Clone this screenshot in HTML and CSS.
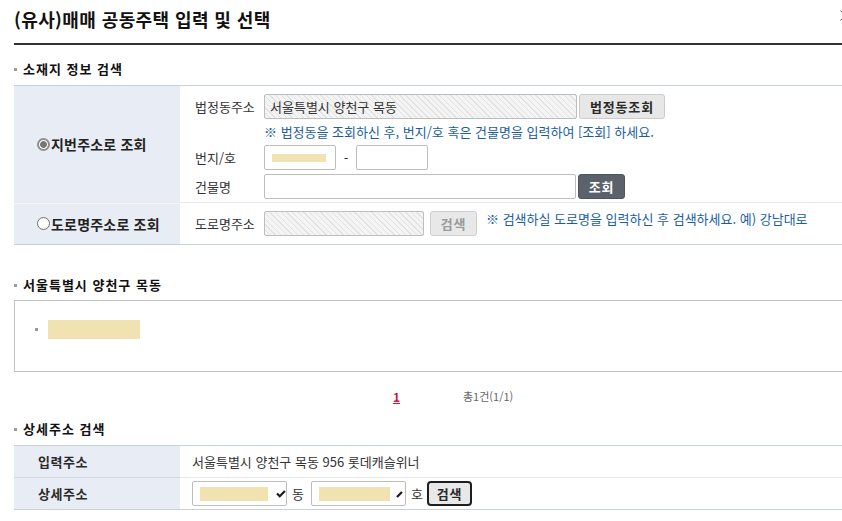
FILE: index.html
```html
<!DOCTYPE html>
<html lang="ko">
<head>
<meta charset="utf-8">
<title>(유사)매매 공동주택 입력 및 선택</title>
<link rel="stylesheet" href="styles.css">
</head>
<body>
<button class="close" type="button" aria-label="닫기">
  <svg width="10" height="11" viewBox="0 0 10 11"><path d="M0.5 0.5 L9.5 10.5 M0.5 10.5 L9.5 0.5" stroke="#555" stroke-width="1" fill="none"/></svg>
</button>
<div class="page">
  <h1 class="title">(유사)매매 공동주택 입력 및 선택</h1>

  <h2 class="sec-title sec-first">소재지 정보 검색</h2>
  <div class="search-table">
    <div class="row">
      <div class="th"><label class="radio"><span class="radio-mark checked"></span>지번주소로 조회</label></div>
      <div class="td td-jibun">
        <div class="line">
          <span class="lbl">법정동주소</span>
          <div class="input hatched wide">서울특별시 양천구 목동</div>
          <button class="btn btn-light" type="button">법정동조회</button>
        </div>
        <div class="notice notice-row">※ 법정동을 조회하신 후, 번지/호 혹은 건물명을 입력하여 [조회] 하세요.</div>
        <div class="line">
          <span class="lbl">번지/호</span>
          <div class="input short"><span class="mask mask-bunji"></span></div>
          <span class="dash">-</span>
          <div class="input short"></div>
        </div>
        <div class="line line-bld">
          <span class="lbl">건물명</span>
          <div class="input wide-b"></div>
          <button class="btn btn-dark" type="button">조회</button>
        </div>
      </div>
    </div>
    <div class="row row-road">
      <div class="th"><label class="radio"><span class="radio-mark"></span>도로명주소로 조회</label></div>
      <div class="td td-road">
        <div class="line">
          <span class="lbl">도로명주소</span>
          <div class="input hatched road"></div>
          <button class="btn btn-disabled" type="button">검색</button>
          <span class="notice notice-inline">※ 검색하실 도로명을 입력하신 후 검색하세요. 예) 강남대로</span>
        </div>
      </div>
    </div>
  </div>

  <h2 class="sec-title sec-second">서울특별시 양천구 목동</h2>
  <div class="result-box">
    <ul class="result-list">
      <li><span class="mask mask-result"></span></li>
    </ul>
  </div>

  <div class="paging">
    <a class="page-num" href="#">1</a>
    <span class="count">총1건(1/1)</span>
  </div>

  <h2 class="sec-title sec-third">상세주소 검색</h2>
  <div class="detail-table">
    <div class="row drow">
      <div class="th th-detail">입력주소</div>
      <div class="td td-detail">서울특별시 양천구 목동 956 롯데캐슬위너</div>
    </div>
    <div class="row drow drow-sep">
      <div class="th th-detail">상세주소</div>
      <div class="td td-detail">
        <div class="select"><span class="mask mask-sel1"></span>
          <svg class="arrow" width="10" height="8" viewBox="0 0 10 8"><path d="M1 3.5 L3.8 6.3 L9 1" stroke="#1a1a1a" stroke-width="2.2" fill="none"/></svg>
        </div>
        <span class="unit">동</span>
        <div class="select"><span class="mask mask-sel2"></span>
          <svg class="arrow arrow2" width="10" height="8" viewBox="0 0 10 8"><path d="M2 7 L7 2" stroke="#1a1a1a" stroke-width="2.2" fill="none"/></svg>
        </div>
        <span class="unit unit-ho">호</span>
        <button class="btn btn-focus" type="button">검색</button>
      </div>
    </div>
  </div>
</div>
</body>
</html>
```
FILE: styles.css
```css
* { box-sizing: border-box; }
html, body { margin: 0; padding: 0; overflow: hidden; background: #fff; }
body {
  position: relative;
  font-family: "Noto Sans CJK KR", "Noto Sans", sans-serif;
  font-size: 13px;
  color: #333;
}
.close {
  position: absolute;
  left: 840px;
  top: 9px;
  width: 12px;
  height: 12px;
  padding: 0;
  border: 0;
  background: none;
}
.close svg { display: block; }
.page { width: 900px; padding-left: 14px; }

.title {
  margin: 0;
  height: 45px;
  padding-top: 7px;
  line-height: 24px;
  font-size: 18px;
  font-weight: bold;
  color: #111;
  letter-spacing: 0.4px;
  border-bottom: 2px solid #333;
}

.sec-title {
  display: flex;
  align-items: center;
  margin: 0;
  height: 16px;
  line-height: 16px;
  font-size: 13px;
  font-weight: bold;
  letter-spacing: 1px;
  color: #111;
}
.sec-title::before {
  content: "";
  width: 3px;
  height: 3px;
  margin-right: 6px;
  background: #9a9a9a;
}
.sec-first { margin: 16px 0 8px; }
.sec-second { margin: 32px 0 7px; }
.sec-third { margin: 17px 0 8px; }

/* search table */
.search-table, .detail-table {
  border-top: 1px solid #c8d0d9;
  border-bottom: 1px solid #c8d0d9;
}
.row { display: grid; grid-template-columns: 167px 1fr; }
.th {
  background: #e8ecf4;
  border-right: 1px solid #fff;
  display: flex;
  align-items: center;
  padding-left: 23px;
}
.row-road { border-top: 1px solid #eaeaea; }
.row-road .th { box-shadow: inset 0 1px 0 #f3f5f9; }

.radio {
  display: inline-flex;
  align-items: center;
  font-size: 14px;
  font-weight: bold;
  letter-spacing: 0.2px;
  color: #222;
}
.radio-mark {
  width: 13px;
  height: 13px;
  border-radius: 50%;
  border: 1px solid #6f6f6f;
  background: #fff;
  margin-right: 1px;
}
.radio-mark.checked {
  border: 2px solid #8e8e8e;
  background: radial-gradient(circle, #767676 0 3px, #fff 3.8px);
}

.td { padding-left: 14px; }
.td-jibun { padding-top: 8px; padding-bottom: 3px; }
.td-road { padding-top: 8px; padding-bottom: 8px; }
.line { display: flex; align-items: center; height: 25px; }
.line-bld { margin-top: 4px; }
.lbl { width: 69px; color: #333; font-size: 13px; }

.input {
  height: 25px;
  border: 1px solid #bdbdbd;
  border-radius: 2px;
  background: #fff;
  display: flex;
  align-items: center;
  padding-left: 5px;
  color: #333;
  font-size: 13px;
}
.hatched {
  background: repeating-linear-gradient(45deg, #f4f4f4 0 3px, #e2e2e2 3px 4px);
}
.wide { width: 313px; }
.wide-b { width: 312px; }
.short { width: 72px; padding-left: 7px; }
.road { width: 160px; }
.dash { width: 20px; text-align: center; color: #333; }

.mask { display: block; background: #f0e3b1; }
.mask-bunji { width: 54px; height: 8px; }

.btn {
  height: 25px;
  margin-left: 2px;
  border-radius: 3px;
  font-family: inherit;
  font-size: 13px;
  font-weight: bold;
  letter-spacing: 0.8px;
  padding: 0;
  line-height: 1;
}
.btn-light {
  width: 86px;
  background: #e7e7e7;
  border: 1px solid #cbcbcb;
  color: #2a2a2a;
}
.btn-dark {
  width: 47px;
  background: #5c626c;
  border: 1px solid #50555d;
  color: #fff;
}
.btn-disabled {
  width: 47px;
  margin-left: 6px;
  background: #e8e8e8;
  border: 1px solid #cfcfcf;
  color: #9a9a9a;
}
.notice { color: #1b5e9f; font-size: 13px; }
.notice-row { height: 26px; line-height: 26px; padding-left: 69px; }
.notice-inline { margin-left: 9px; margin-top: -10px; }

/* result box */
.result-box {
  height: 72px;
  border: 1px solid #c2c2c2;
  padding: 19px 0 0 20px;
}
.result-list { margin: 0; padding: 0; list-style: none; }
.result-list li { display: flex; align-items: center; }
.result-list li::before {
  content: "";
  width: 3px;
  height: 3px;
  background: #9a9a9a;
  margin-right: 10px;
}
.mask-result { width: 92px; height: 19px; }

.paging {
  display: flex;
  align-items: center;
  margin-top: 16px;
  height: 16px;
  padding-left: 379px;
}
.page-num {
  color: #d1123d;
  font-weight: bold;
  font-size: 12px;
  text-decoration: underline;
  width: 70px;
}
.count { color: #666; font-size: 11px; }

/* detail table */
.drow { height: 31px; }
.drow-sep { height: 32px; }
.drow-sep .th { border-top: 1px solid #d3d9e1; }
.drow-sep .td { border-top: 1px solid #e8e8e8; }
.th-detail {
  padding-left: 24px;
  font-size: 13px;
  font-weight: bold;
  letter-spacing: 0.5px;
  color: #2a2a2a;
}
.td-detail {
  display: flex;
  align-items: center;
  padding-left: 11px;
  font-size: 13px;
  color: #333;
}
.select {
  width: 95px;
  height: 25px;
  border: 1px solid #bdbdbd;
  border-radius: 2px;
  background: #fff;
  display: flex;
  align-items: center;
  padding-left: 7px;
}
.mask-sel1 { width: 69px; height: 14px; }
.mask-sel2 { width: 72px; height: 14px; }
.arrow { margin-left: 8px; }
.arrow2 { margin-left: 5px; }
.unit { width: 24px; padding-left: 5px; }
.unit-ho { width: 21px; }
.btn-focus {
  width: 45px;
  margin-left: 0;
  background: #e8e8e8;
  border: 2px solid #1e1e1e;
  border-radius: 4px;
  color: #2a2a2a;
}
```
